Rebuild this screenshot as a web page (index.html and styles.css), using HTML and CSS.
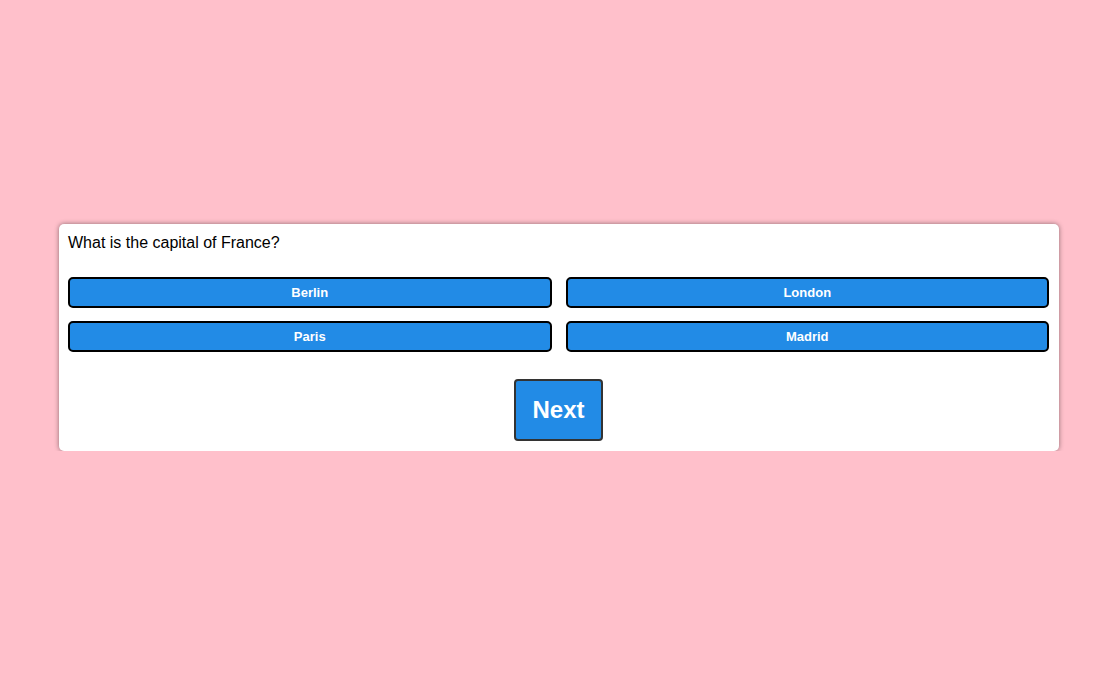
FILE: index.html
```html
<!DOCTYPE html>
<html>
<head>
<meta charset="utf-8">
<link rel="stylesheet" href="styles.css">
</head>
<body>
<div class="page">
  <div class="card">
    <div class="question">What is the capital of France?</div>
    <div class="answers">
      <button class="answer">Berlin</button>
      <button class="answer">London</button>
      <button class="answer">Paris</button>
      <button class="answer">Madrid</button>
    </div>
    <div class="footer">
      <button class="next">Next</button>
    </div>
  </div>
</div>
</body>
</html>
```
FILE: styles.css
```css
html, body {
  margin: 0;
  padding: 0;
  background: #ffc0cb;
  font-family: "Liberation Sans", Arial, sans-serif;
}
.page {
  display: flex;
  justify-content: center;
  padding: 224px 1px 0 0;
}
.card {
  width: 1000px;
  box-sizing: border-box;
  background: #fff;
  border-radius: 5px;
  box-shadow: 0 0 5px rgba(0, 0, 0, 0.45);
  padding: 10px 10px 10px 9px;
}
.question {
  font-size: 16px;
  line-height: 18px;
  color: #000;
  margin-bottom: 25px;
}
.answers {
  display: grid;
  grid-template-columns: 1fr 1fr;
  column-gap: 14px;
  row-gap: 13px;
}
.answer {
  height: 31px;
  background: #228be6;
  color: #fff;
  border: 2px solid #000;
  border-radius: 5px;
  font-family: "Liberation Sans", Arial, sans-serif;
  font-size: 13px;
  font-weight: bold;
  padding: 0;
}
.footer {
  display: flex;
  justify-content: center;
  margin-top: 27px;
}
.next {
  width: 89px;
  height: 62px;
  background: #228be6;
  color: #fff;
  border: 2px solid #333;
  border-radius: 4px;
  font-family: "Liberation Sans", Arial, sans-serif;
  font-size: 24px;
  font-weight: bold;
  padding: 0;
}
```
